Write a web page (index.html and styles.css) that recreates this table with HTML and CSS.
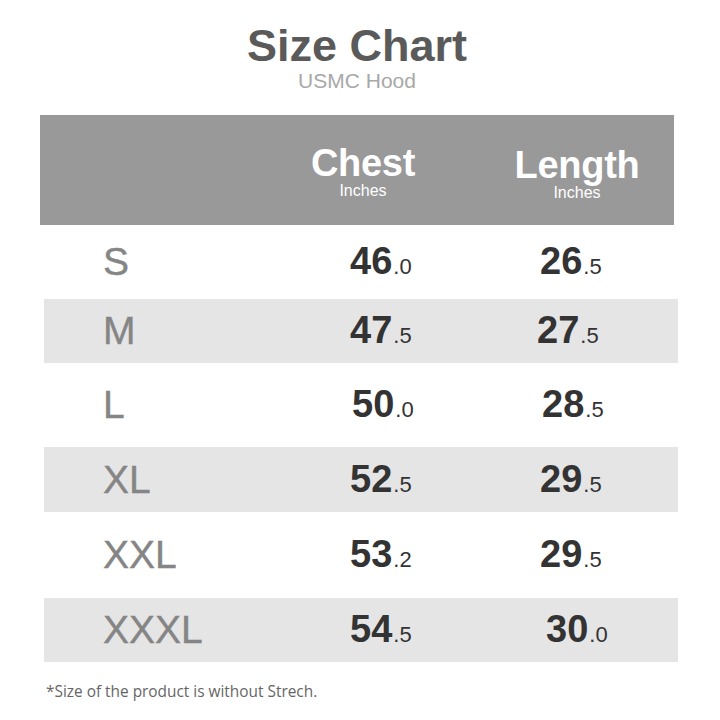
FILE: index.html
```html
<!DOCTYPE html>
<html>
<head>
<meta charset="utf-8">
<title>Size Chart</title>
<link rel="stylesheet" href="styles.css">
</head>
<body>
<div class="page">
  <div class="heading">
    <h1 class="title">Size Chart</h1>
    <div class="subtitle">USMC Hood</div>
  </div>
  <div class="header">
    <div class="col-head">
      <div class="col-name">Chest</div>
      <div class="col-unit">Inches</div>
    </div>
    <div class="col-head col-head-length">
      <div class="col-name">Length</div>
      <div class="col-unit">Inches</div>
    </div>
  </div>
  <div class="rows">
    <div class="row row-s">
      <div class="size">S</div>
      <div class="num"><span class="int">46</span><span class="dec">.0</span></div>
      <div class="num"><span class="int">26</span><span class="dec">.5</span></div>
    </div>
    <div class="row row-m alt">
      <div class="size">M</div>
      <div class="num"><span class="int">47</span><span class="dec">.5</span></div>
      <div class="num shift-l"><span class="int">27</span><span class="dec">.5</span></div>
    </div>
    <div class="row row-l">
      <div class="size">L</div>
      <div class="num shift-r"><span class="int">50</span><span class="dec">.0</span></div>
      <div class="num shift-r"><span class="int">28</span><span class="dec">.5</span></div>
    </div>
    <div class="row row-xl alt">
      <div class="size">XL</div>
      <div class="num"><span class="int">52</span><span class="dec">.5</span></div>
      <div class="num"><span class="int">29</span><span class="dec">.5</span></div>
    </div>
    <div class="row row-xxl">
      <div class="size">XXL</div>
      <div class="num"><span class="int">53</span><span class="dec">.2</span></div>
      <div class="num"><span class="int">29</span><span class="dec">.5</span></div>
    </div>
    <div class="row row-xxxl alt">
      <div class="size">XXXL</div>
      <div class="num"><span class="int">54</span><span class="dec">.5</span></div>
      <div class="num shift-rr"><span class="int">30</span><span class="dec">.0</span></div>
    </div>
  </div>
  <p class="note">*Size of the product is without Strech.</p>
</div>
</body>
</html>
```

FILE: styles.css
```css
html, body {
  margin: 0;
  padding: 0;
  background: #ffffff;
}

.page {
  width: 720px;
  height: 720px;
  font-family: "Liberation Sans", Arial, sans-serif;
}

.heading {
  width: 634px;
  margin-left: 40px;
  padding-top: 23px;
  text-align: center;
}

.title {
  margin: 0;
  font-size: 45px;
  line-height: 46px;
  font-weight: 700;
  color: #5a5a5a;
}

.subtitle {
  font-size: 21px;
  line-height: 24px;
  color: #a8a8a8;
}

.header {
  box-sizing: border-box;
  width: 634px;
  height: 110px;
  margin: 22px 0 0 40px;
  padding: 31px 0 0 243px;
  background: #999999;
  display: flex;
  gap: 54px;
}

.col-head {
  width: 160px;
  text-align: center;
  color: #ffffff;
}

.col-head-length {
  padding-top: 2px;
}

.col-name {
  font-size: 38px;
  line-height: 34px;
  font-weight: 700;
  letter-spacing: -0.3px;
}

.col-unit {
  margin-top: 3px;
  font-size: 16px;
  line-height: 16px;
}

.rows {
  width: 634px;
  margin-left: 44px;
}

.row {
  display: grid;
  grid-template-columns: 59px 247px 190px 1fr;
  align-items: center;
}

.row::before {
  content: "";
}

.alt {
  background: #e5e5e5;
}

.row-s { height: 74px; }
.row-m { height: 64px; }
.row-l { height: 84px; }
.row-xl { height: 65px; }
.row-xxl { height: 86px; }
.row-xxxl { height: 64px; }

.size {
  font-size: 39px;
  line-height: 38px;
  color: #858585;
  -webkit-text-stroke: 0.4px #858585;
}

.num {
  padding-top: 6px;
  color: #333333;
  line-height: 38px;
  white-space: nowrap;
}

.shift-l { margin-left: -3px; }
.shift-r { margin-left: 2px; }
.shift-rr { margin-left: 6px; }

.int {
  font-size: 38px;
  font-weight: 700;
}

.dec {
  font-size: 22px;
  margin-left: 1px;
}

.note {
  margin: 20px 0 0 46px;
  font-family: "Open Sans", sans-serif;
  font-size: 15.4px;
  line-height: 20px;
  color: #666666;
}
```
